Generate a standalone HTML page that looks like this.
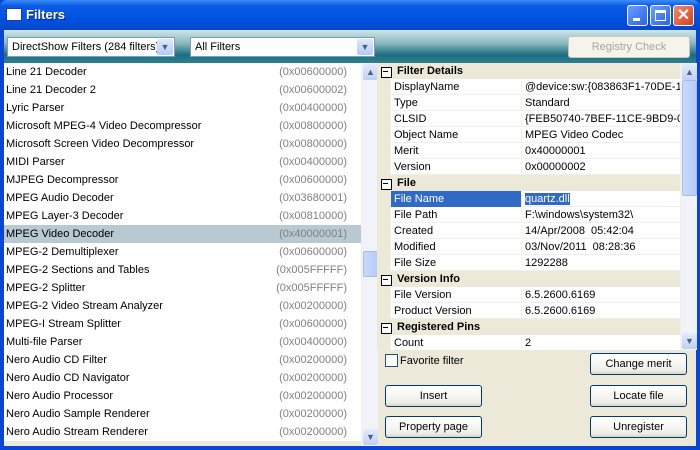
<!DOCTYPE html>
<html><head><style>
*{box-sizing:border-box;margin:0;padding:0}
body{width:700px;height:450px;overflow:hidden;font-family:"Liberation Sans",sans-serif;font-size:11px;background:#0a46d6;position:relative;color:#000}
.title{position:absolute;left:0;top:0;width:700px;height:30px;background:linear-gradient(#3a8cf7,#0a5ae6 20%,#0050e0 70%,#0646c8);border-radius:7px 7px 0 0}
.title .t{position:absolute;left:26px;top:7px;color:#fff;font-weight:bold;font-size:13px;text-shadow:1px 1px #0a2a80}
.ico{position:absolute;left:7px;top:9px;width:14px;height:11px;background:#fff;border-top:3px solid #fff;box-shadow:0 0 0 1px #1a3fa0}
.wb{position:absolute;top:5px;width:21px;height:21px;border:1px solid #fff;border-radius:3px;background:linear-gradient(135deg,#6aa0ff,#2a62e8)}
.frame{position:absolute;left:4px;top:30px;width:692px;height:416px;background:#ece9d8}
.tool{position:absolute;left:0;top:0;width:692px;height:33px;background:linear-gradient(#cfe6e8,#8ab8c0 40%,#1e6f80 75%,#2c8090)}
.combo{position:absolute;top:7px;height:20px;background:#fff;border:1px solid #7f9db9;padding:3px 4px;font-size:11px;white-space:nowrap;overflow:hidden}
.dd{position:absolute;right:1px;top:1px;width:16px;height:16px;background:linear-gradient(#dfe9fd,#b3c9f5);border-radius:2px;color:#4d6185;font-size:9px;text-align:center;line-height:16px}
.btn{position:absolute;height:22px;border:1px solid #003c74;border-radius:3px;background:linear-gradient(#fff,#f0f0ea 80%,#d8d4c8);text-align:center;line-height:20px;font-size:11px}
.list{position:absolute;left:0;top:33px;width:357px;height:378px;background:#fff;overflow:hidden}
.row{height:18px;line-height:19px;padding-left:2px;position:relative;white-space:nowrap}
.row span{position:absolute;right:14px;color:#808080}
.sel{background:#b8c9d2}
.sb{position:absolute;width:17px;background:#f1f3f8;border-left:1px solid #eef}
.arr{position:absolute;left:1px;width:15px;height:16px;background:linear-gradient(#e3ebfd,#bfd0f4);border-radius:2px;color:#4d6185;font-size:9px;text-align:center;line-height:16px}
.thumb{position:absolute;left:1px;width:15px;background:linear-gradient(90deg,#cad9fb,#b5cbf7);border:1px solid #a6bde9;border-radius:2px}
.grid{position:absolute;left:373px;top:33px;width:303px;height:287px;background:#fff;overflow:hidden}
.g{height:16px;line-height:16px;position:relative;white-space:nowrap;border-bottom:1px solid #f0efe8}
.cat{background:#ece9d8;font-weight:bold;padding-left:20px;border:none}
.cat:before{content:"";position:absolute;left:4px;top:4px;width:9px;height:9px;border:1px solid #000;background:#fff}
.cat:after{content:"";position:absolute;left:6px;top:8px;width:5px;height:1px;background:#000}
.p{margin-left:13px;border-left:1px solid #f0efe8}
.p b{font-weight:normal;display:inline-block;width:130px;padding-left:3px}
.p i{font-style:normal;padding-left:3px;border-left:1px solid #f0efe8}
.gut{position:absolute;left:0;top:0;width:13px;height:287px;background:#ece9d8}
</style></head><body>
<div class="title"><div class="ico"></div><div class="t">Filters</div>
<div class="wb" style="left:627px"><div style="position:absolute;left:5px;top:12px;width:7px;height:3px;background:#fff"></div></div>
<div class="wb" style="left:650px"><div style="position:absolute;left:4px;top:4px;width:11px;height:11px;border:1px solid #fff;border-top-width:3px"></div></div>
<div class="wb" style="left:673px;background:linear-gradient(135deg,#f08a6a,#d8401c);color:#fff;font-weight:bold;font-size:16px;text-align:center;line-height:19px">✕</div>
</div>
<div class="frame">
<div class="tool">
<div class="combo" style="left:3px;width:168px">DirectShow Filters (284 filters)<div class="dd">▼</div></div>
<div class="combo" style="left:186px;width:185px">All Filters<div class="dd">▼</div></div>
<div class="btn" style="left:564px;top:6px;width:122px;border-color:#c9c7ba;color:#a8a596;background:#f5f4ea">Registry Check</div>
</div>
<div class="list">
<div class="row">Line 21 Decoder<span>(0x00600000)</span></div>
<div class="row">Line 21 Decoder 2<span>(0x00600002)</span></div>
<div class="row">Lyric Parser<span>(0x00400000)</span></div>
<div class="row">Microsoft MPEG-4 Video Decompressor<span>(0x00800000)</span></div>
<div class="row">Microsoft Screen Video Decompressor<span>(0x00800000)</span></div>
<div class="row">MIDI Parser<span>(0x00400000)</span></div>
<div class="row">MJPEG Decompressor<span>(0x00600000)</span></div>
<div class="row">MPEG Audio Decoder<span>(0x03680001)</span></div>
<div class="row">MPEG Layer-3 Decoder<span>(0x00810000)</span></div>
<div class="row sel">MPEG Video Decoder<span>(0x40000001)</span></div>
<div class="row">MPEG-2 Demultiplexer<span>(0x00600000)</span></div>
<div class="row">MPEG-2 Sections and Tables<span>(0x005FFFFF)</span></div>
<div class="row">MPEG-2 Splitter<span>(0x005FFFFF)</span></div>
<div class="row">MPEG-2 Video Stream Analyzer<span>(0x00200000)</span></div>
<div class="row">MPEG-I Stream Splitter<span>(0x00600000)</span></div>
<div class="row">Multi-file Parser<span>(0x00400000)</span></div>
<div class="row">Nero Audio CD Filter<span>(0x00200000)</span></div>
<div class="row">Nero Audio CD Navigator<span>(0x00200000)</span></div>
<div class="row">Nero Audio Processor<span>(0x00200000)</span></div>
<div class="row">Nero Audio Sample Renderer<span>(0x00200000)</span></div>
<div class="row">Nero Audio Stream Renderer<span>(0x00200000)</span></div>
</div>
<div class="sb" style="left:357px;top:33px;height:383px"><div class="arr" style="top:1px">▲</div><div class="thumb" style="top:188px;height:26px"></div><div class="arr" style="top:366px">▼</div></div>
<div class="grid"><div class="gut"></div><div style="position:relative">
<div class="g cat">Filter Details</div>
<div class="g p"><b>DisplayName</b><i>@device:sw:{083863F1-70DE-1</i></div>
<div class="g p"><b>Type</b><i>Standard</i></div>
<div class="g p"><b>CLSID</b><i>{FEB50740-7BEF-11CE-9BD9-00</i></div>
<div class="g p"><b>Object Name</b><i>MPEG Video Codec</i></div>
<div class="g p"><b>Merit</b><i>0x40000001</i></div>
<div class="g p"><b>Version</b><i>0x00000002</i></div>
<div class="g cat">File</div>
<div class="g p"><b style="background:#316ac5;color:#fff">File Name</b><i><span style="background:#316ac5;color:#fff">quartz.dll</span></i></div>
<div class="g p"><b>File Path</b><i>F:\windows\system32\</i></div>
<div class="g p"><b>Created</b><i>14/Apr/2008&nbsp; 05:42:04</i></div>
<div class="g p"><b>Modified</b><i>03/Nov/2011&nbsp; 08:28:36</i></div>
<div class="g p"><b>File Size</b><i>1292288</i></div>
<div class="g cat">Version Info</div>
<div class="g p"><b>File Version</b><i>6.5.2600.6169</i></div>
<div class="g p"><b>Product Version</b><i>6.5.2600.6169</i></div>
<div class="g cat">Registered Pins</div>
<div class="g p"><b>Count</b><i>2</i></div>
</div></div>
<div class="sb" style="left:676px;top:33px;height:287px"><div class="arr" style="top:1px">▲</div><div class="thumb" style="top:17px;height:116px"></div><div class="arr" style="top:270px">▼</div></div>
<div style="position:absolute;left:381px;top:324px;width:13px;height:13px;border:1px solid #1c5180;background:#fff"></div>
<div style="position:absolute;left:396px;top:325px">Favorite filter</div>
<div class="btn" style="left:586px;top:323px;width:97px">Change merit</div>
<div class="btn" style="left:381px;top:355px;width:97px">Insert</div>
<div class="btn" style="left:586px;top:355px;width:97px">Locate file</div>
<div class="btn" style="left:381px;top:386px;width:97px">Property page</div>
<div class="btn" style="left:586px;top:386px;width:97px">Unregister</div>
</div>
</body></html>
